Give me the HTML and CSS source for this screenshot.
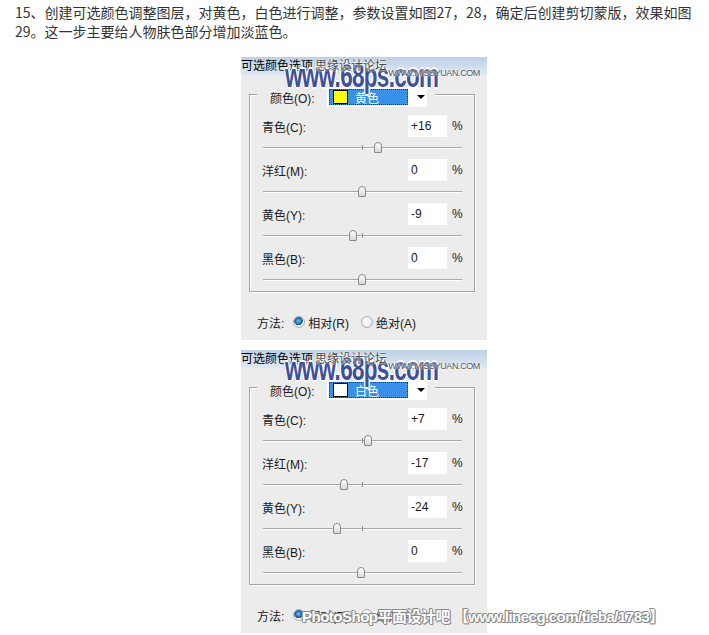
FILE: index.html
```html
<!DOCTYPE html>
<html lang="zh-CN">
<head>
    <meta charset="UTF-8">
    <title>可选颜色调整</title>
    <link rel="stylesheet" href="styles.css">
</head>
<body>
    <p class="intro">15、创建可选颜色调整图层，对黄色，白色进行调整，参数设置如图27，28，确定后创建剪切蒙版，效果如图<br>29。这一步主要给人物肤色部分增加淡蓝色。</p>

    <!-- 图27 黄色 -->
    <div class="panel">
        <div class="titlebar">可选颜色选项</div>
        <div class="wm-big">www.68ps.com</div>
        <div class="wm-site">思缘设计论坛 <span>WWW.MISSYUAN.COM</span></div>
        <div class="group">
            <div class="legend">
                <span class="legend-label">颜色(O):</span>
                <span class="select">
                    <span class="select-value"><i class="swatch swatch-yellow"></i>黄色</span>
                    <span class="arrow"></span>
                </span>
            </div>
            <div class="row">
                <div class="row-top"><label>青色(C):</label><span class="num">+16</span><span class="pct">%</span></div>
                <div class="slider"><div class="track"></div><i class="tick"></i><i class="thumb" style="left: 116px"></i></div>
            </div>
            <div class="row">
                <div class="row-top"><label>洋红(M):</label><span class="num">0</span><span class="pct">%</span></div>
                <div class="slider"><div class="track"></div><i class="tick"></i><i class="thumb" style="left: 100px"></i></div>
            </div>
            <div class="row">
                <div class="row-top"><label>黄色(Y):</label><span class="num">-9</span><span class="pct">%</span></div>
                <div class="slider"><div class="track"></div><i class="tick"></i><i class="thumb" style="left: 91px"></i></div>
            </div>
            <div class="row">
                <div class="row-top"><label>黑色(B):</label><span class="num">0</span><span class="pct">%</span></div>
                <div class="slider"><div class="track"></div><i class="tick"></i><i class="thumb" style="left: 100px"></i></div>
            </div>
        </div>
        <div class="method">
            <span class="method-label">方法:</span>
            <i class="radio checked"></i><span class="radio-text">相对(R)</span>
            <i class="radio"></i><span class="radio-text">绝对(A)</span>
        </div>
    </div>

    <!-- 图28 白色 -->
    <div class="panel">
        <div class="titlebar">可选颜色选项</div>
        <div class="wm-big">www.68ps.com</div>
        <div class="wm-site">思缘设计论坛 <span>WWW.MISSYUAN.COM</span></div>
        <div class="group">
            <div class="legend">
                <span class="legend-label">颜色(O):</span>
                <span class="select">
                    <span class="select-value"><i class="swatch swatch-white"></i>白色</span>
                    <span class="arrow"></span>
                </span>
            </div>
            <div class="row">
                <div class="row-top"><label>青色(C):</label><span class="num">+7</span><span class="pct">%</span></div>
                <div class="slider"><div class="track"></div><i class="tick"></i><i class="thumb" style="left: 106px"></i></div>
            </div>
            <div class="row">
                <div class="row-top"><label>洋红(M):</label><span class="num">-17</span><span class="pct">%</span></div>
                <div class="slider"><div class="track"></div><i class="tick"></i><i class="thumb" style="left: 82px"></i></div>
            </div>
            <div class="row">
                <div class="row-top"><label>黄色(Y):</label><span class="num">-24</span><span class="pct">%</span></div>
                <div class="slider"><div class="track"></div><i class="tick"></i><i class="thumb" style="left: 75px"></i></div>
            </div>
            <div class="row">
                <div class="row-top"><label>黑色(B):</label><span class="num">0</span><span class="pct">%</span></div>
                <div class="slider"><div class="track"></div><i class="tick"></i><i class="thumb" style="left: 99px"></i></div>
            </div>
        </div>
        <div class="method">
            <span class="method-label">方法:</span>
            <i class="radio checked"></i><span class="radio-text">相对(R)</span>
            <i class="radio"></i><span class="radio-text">绝对(A)</span>
        </div>
    </div>

    <div class="wm-bottom">PhotoShop平面设计吧 【www.linecg.com/tieba/1783】</div>
</body>
</html>
```

FILE: styles.css
```css
body {
    margin: 0;
    padding: 3px 0 0;
    background: #fff;
    font-family: "Noto Sans CJK SC", sans-serif;
    color: #333;
    position: relative;
}
.intro {
    margin: 0 0 16px 15px;
    font-size: 14px;
    line-height: 19px;
}

/* 对话框 */
.panel {
    position: relative;
    width: 246px;
    height: 283px;
    margin: 0 0 10px 241px;
    background: #ececec;
    font-family: "Liberation Sans", "Noto Sans CJK SC", sans-serif;
    font-size: 12px;
    color: #1a1a1a;
    overflow: hidden;
}
.titlebar {
    height: 18px;
    line-height: 18px;
    background: linear-gradient(#bdd0e6, #dfe8f2);
    color: #000;
}
.group {
    width: 226px;
    box-sizing: border-box;
    margin: 19px 0 0 8px;
    padding: 0 12px;
    border: 1px solid #a2a2a2;
    box-shadow: 1px 1px 0 #fff, inset 1px 1px 0 #fff;
}
.legend {
    display: flex;
    align-items: center;
    width: 178px;
    height: 20px;
    box-sizing: border-box;
    margin: -8px 0 8px -5px;
    padding: 0 8px 0 13px;
    background: #ececec;
}
.legend-label {
    flex: 1;
}
.select {
    display: flex;
    align-items: center;
    width: 100px;
    height: 20px;
    box-sizing: border-box;
    padding: 2px;
    background: #fff;
}
.select-value {
    display: flex;
    align-items: center;
    width: 79px;
    height: 16px;
    box-sizing: border-box;
    border: 1px dotted #333;
    background: #3a8fe8;
    color: #fff;
}
.swatch {
    width: 13px;
    height: 12px;
    margin: 0 7px 0 3px;
    border: 1px solid #000;
}
.swatch-yellow {
    background: #ffff00;
}
.swatch-white {
    background: #fff;
}
.arrow {
    margin-left: 9px;
    border-left: 4px solid transparent;
    border-right: 4px solid transparent;
    border-top: 4px solid #000;
}
.row-top {
    display: flex;
    align-items: center;
    height: 22px;
}
.row-top label {
    flex: 1;
}
.num {
    width: 39px;
    height: 22px;
    line-height: 22px;
    box-sizing: border-box;
    padding-left: 3px;
    margin-right: 5px;
    background: #fff;
}
.pct {
    width: 10px;
    text-align: right;
}
.slider {
    position: relative;
    height: 22px;
    box-sizing: border-box;
    padding: 10px 0 0 1px;
}
.track {
    border-top: 1px solid #a8a8a8;
    border-bottom: 1px solid #fff;
}
.tick {
    position: absolute;
    left: 100px;
    top: 8px;
    width: 1px;
    height: 5px;
    background: #8c8c8c;
}
.thumb {
    position: absolute;
    top: 5px;
    width: 8px;
    height: 11px;
    margin-left: -4px;
    box-sizing: border-box;
    border: 1px solid #888;
    border-radius: 4px 4px 1px 1px;
    background: linear-gradient(#fff, #d8d8d8);
}
.method {
    display: flex;
    align-items: center;
    height: 20px;
    margin-top: 20px;
    padding-left: 16px;
}
.method-label {
    margin-right: 9px;
}
.radio {
    width: 12px;
    height: 12px;
    box-sizing: border-box;
    border: 1px solid #a5afb8;
    border-radius: 50%;
    background: radial-gradient(circle at 40% 40%, #fff, #dfe3e7);
}
.radio.checked {
    background: radial-gradient(circle at 45% 40%, #7fc3ec 0, #1f6fae 3px, #1d5f97 4px, #fff 4.5px, #e4e8ec 6px);
}
.radio-text {
    margin: 0 12px 0 3px;
}

/* 水印 */
.wm-site {
    position: absolute;
    left: 74px;
    top: 2px;
    white-space: nowrap;
    color: #4a4a4a;
    font-size: 12px;
    line-height: 14px;
    text-shadow: 0 0 2px #fff, 0 0 2px #fff;
}
.wm-site span {
    margin-left: -2px;
    font-family: "Liberation Sans", sans-serif;
    font-size: 9px;
    letter-spacing: -0.4px;
    color: #555;
    position: relative;
    top: 6px;
}
.wm-big {
    position: absolute;
    left: 44px;
    top: 0;
    white-space: nowrap;
    font-family: "Liberation Sans", sans-serif;
    font-weight: bold;
    font-size: 34px;
    line-height: 36px;
    color: #3f4f98;
    letter-spacing: -1px;
    transform: scaleX(0.66);
    transform-origin: left top;
    text-shadow: 1px 0 0 #fff, -1px 0 0 #fff, 0 1px 0 #fff, 0 -1px 0 #fff, 2px 0 0 #fff, -2px 0 0 #fff, 0 2px 0 #fff, 0 -2px 0 #fff, 0 0 3px #6f86c4;
}
.wm-bottom {
    position: absolute;
    left: 302px;
    top: 608px;
    white-space: nowrap;
    font-family: "Liberation Sans", "Noto Sans CJK SC", sans-serif;
    font-weight: bold;
    font-size: 15px;
    line-height: 18px;
    letter-spacing: -0.5px;
    color: #fff;
    text-shadow: 1px 0 0 #8a8a8a, -1px 0 0 #8a8a8a, 0 1px 0 #8a8a8a, 0 -1px 0 #8a8a8a, 1px 1px 0 #8a8a8a, -1px -1px 0 #8a8a8a;
}
```
